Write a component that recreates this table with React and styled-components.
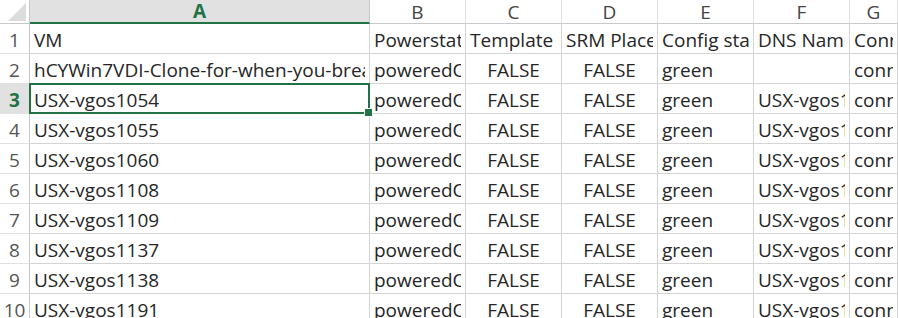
import styled, { createGlobalStyle, css } from 'styled-components';

const GlobalStyle = createGlobalStyle`
  html, body {
    margin: 0;
    padding: 0;
    background: #ffffff;
    overflow: hidden;
  }
`;

const GREEN = '#217346';
const GRID = '#d4d4d4';

const COLUMNS = ['A', 'B', 'C', 'D', 'E', 'F', 'G'];
const SELECTED_COL = 'A';
const SELECTED_ROW = 3;

const header = ['VM', 'Powerstate', 'Template', 'SRM Placeholder', 'Config status', 'DNS Name', 'Connection state'];
const vms = ['USX-vgos1054', 'USX-vgos1055', 'USX-vgos1060', 'USX-vgos1108', 'USX-vgos1109', 'USX-vgos1137', 'USX-vgos1138', 'USX-vgos1191'];

const rows = [
  header,
  ['hCYWin7VDI-Clone-for-when-you-break-it', 'poweredOn', 'FALSE', 'FALSE', 'green', '', 'connected'],
  ...vms.map(vm => [vm, 'poweredOn', 'FALSE', 'FALSE', 'green', vm, 'connected']),
];

const Sheet = styled.div`
  display: grid;
  grid-template-columns: 30px 340px repeat(5, 96px) 1fr;
  grid-auto-rows: 30px;
  grid-template-rows: 24px;
  width: 898px;
  height: 318px;
  overflow: hidden;
  font-family: "Open Sans", "Liberation Sans", sans-serif;
  background: #ffffff;
`;

const Corner = styled.div`
  box-sizing: border-box;
  border-right: 1px solid #c8c8c8;
  border-bottom: 1px solid #c8c8c8;
  display: flex;
  align-items: flex-end;
  justify-content: flex-end;
  padding: 0 3px 2px 0;
`;

const ColHeader = styled.div`
  box-sizing: border-box;
  display: flex;
  align-items: center;
  justify-content: center;
  font-size: 19px;
  color: #444;
  background: #ffffff;
  border-right: 1px solid #e1e1e1;
  border-bottom: 1px solid #c8c8c8;
  ${({ $active }) => $active && css`
    background: #e1e1e1;
    color: ${GREEN};
    font-weight: 700;
    border-right-color: #c8c8c8;
    border-bottom: 2px solid ${GREEN};
  `}
`;

const RowHeader = styled.div`
  box-sizing: border-box;
  display: flex;
  align-items: center;
  justify-content: center;
  padding-top: 2px;
  font-size: 19px;
  color: #555;
  border-right: 1px solid #c8c8c8;
  border-bottom: 1px solid #e1e1e1;
  ${({ $active }) => $active && css`
    background: #e1e1e1;
    color: ${GREEN};
    font-weight: 700;
  `}
`;

const Cell = styled.div`
  box-sizing: border-box;
  position: relative;
  display: flex;
  align-items: center;
  justify-content: ${({ $center }) => ($center ? 'center' : 'flex-start')};
  padding: 2px 4px 0;
  border-right: 1px solid ${GRID};
  border-bottom: 1px solid ${GRID};
  font-size: 19px;
  color: #262626;
  white-space: nowrap;
  overflow: ${({ $selected }) => ($selected ? 'visible' : 'hidden')};
`;

const CellText = styled.span`
  overflow: hidden;
  display: block;
  max-width: 100%;
  text-overflow: clip;
`;

const Selection = styled.div`
  position: absolute;
  left: -1px;
  top: -1px;
  right: -1px;
  bottom: -1px;
  border: 2px solid ${GREEN};
  pointer-events: none;
  z-index: 2;
`;

const FillHandle = styled.div`
  position: absolute;
  right: -5px;
  bottom: -5px;
  width: 7px;
  height: 7px;
  background: ${GREEN};
  border: 1px solid #ffffff;
`;

const App = () => (
  <>
    <GlobalStyle />
    <Sheet>
      <Corner>
        <svg width="18" height="18" viewBox="0 0 18 18">
          <polygon points="18,0 18,18 0,18" fill="#dcdcdc" />
        </svg>
      </Corner>
      {COLUMNS.map(col => (
        <ColHeader key={col} $active={col === SELECTED_COL}>{col}</ColHeader>
      ))}
      {rows.map((row, r) => {
        const rowNum = r + 1;
        return [
          <RowHeader key={`h${rowNum}`} $active={rowNum === SELECTED_ROW}>{rowNum}</RowHeader>,
          ...row.map((value, c) => {
            const selected = rowNum === SELECTED_ROW && c === 0;
            return (
              <Cell key={`${rowNum}-${c}`} $center={value === 'FALSE'} $selected={selected}>
                <CellText>{value}</CellText>
                {selected && (
                  <Selection>
                    <FillHandle />
                  </Selection>
                )}
              </Cell>
            );
          }),
        ];
      })}
    </Sheet>
  </>
);

export default App;
